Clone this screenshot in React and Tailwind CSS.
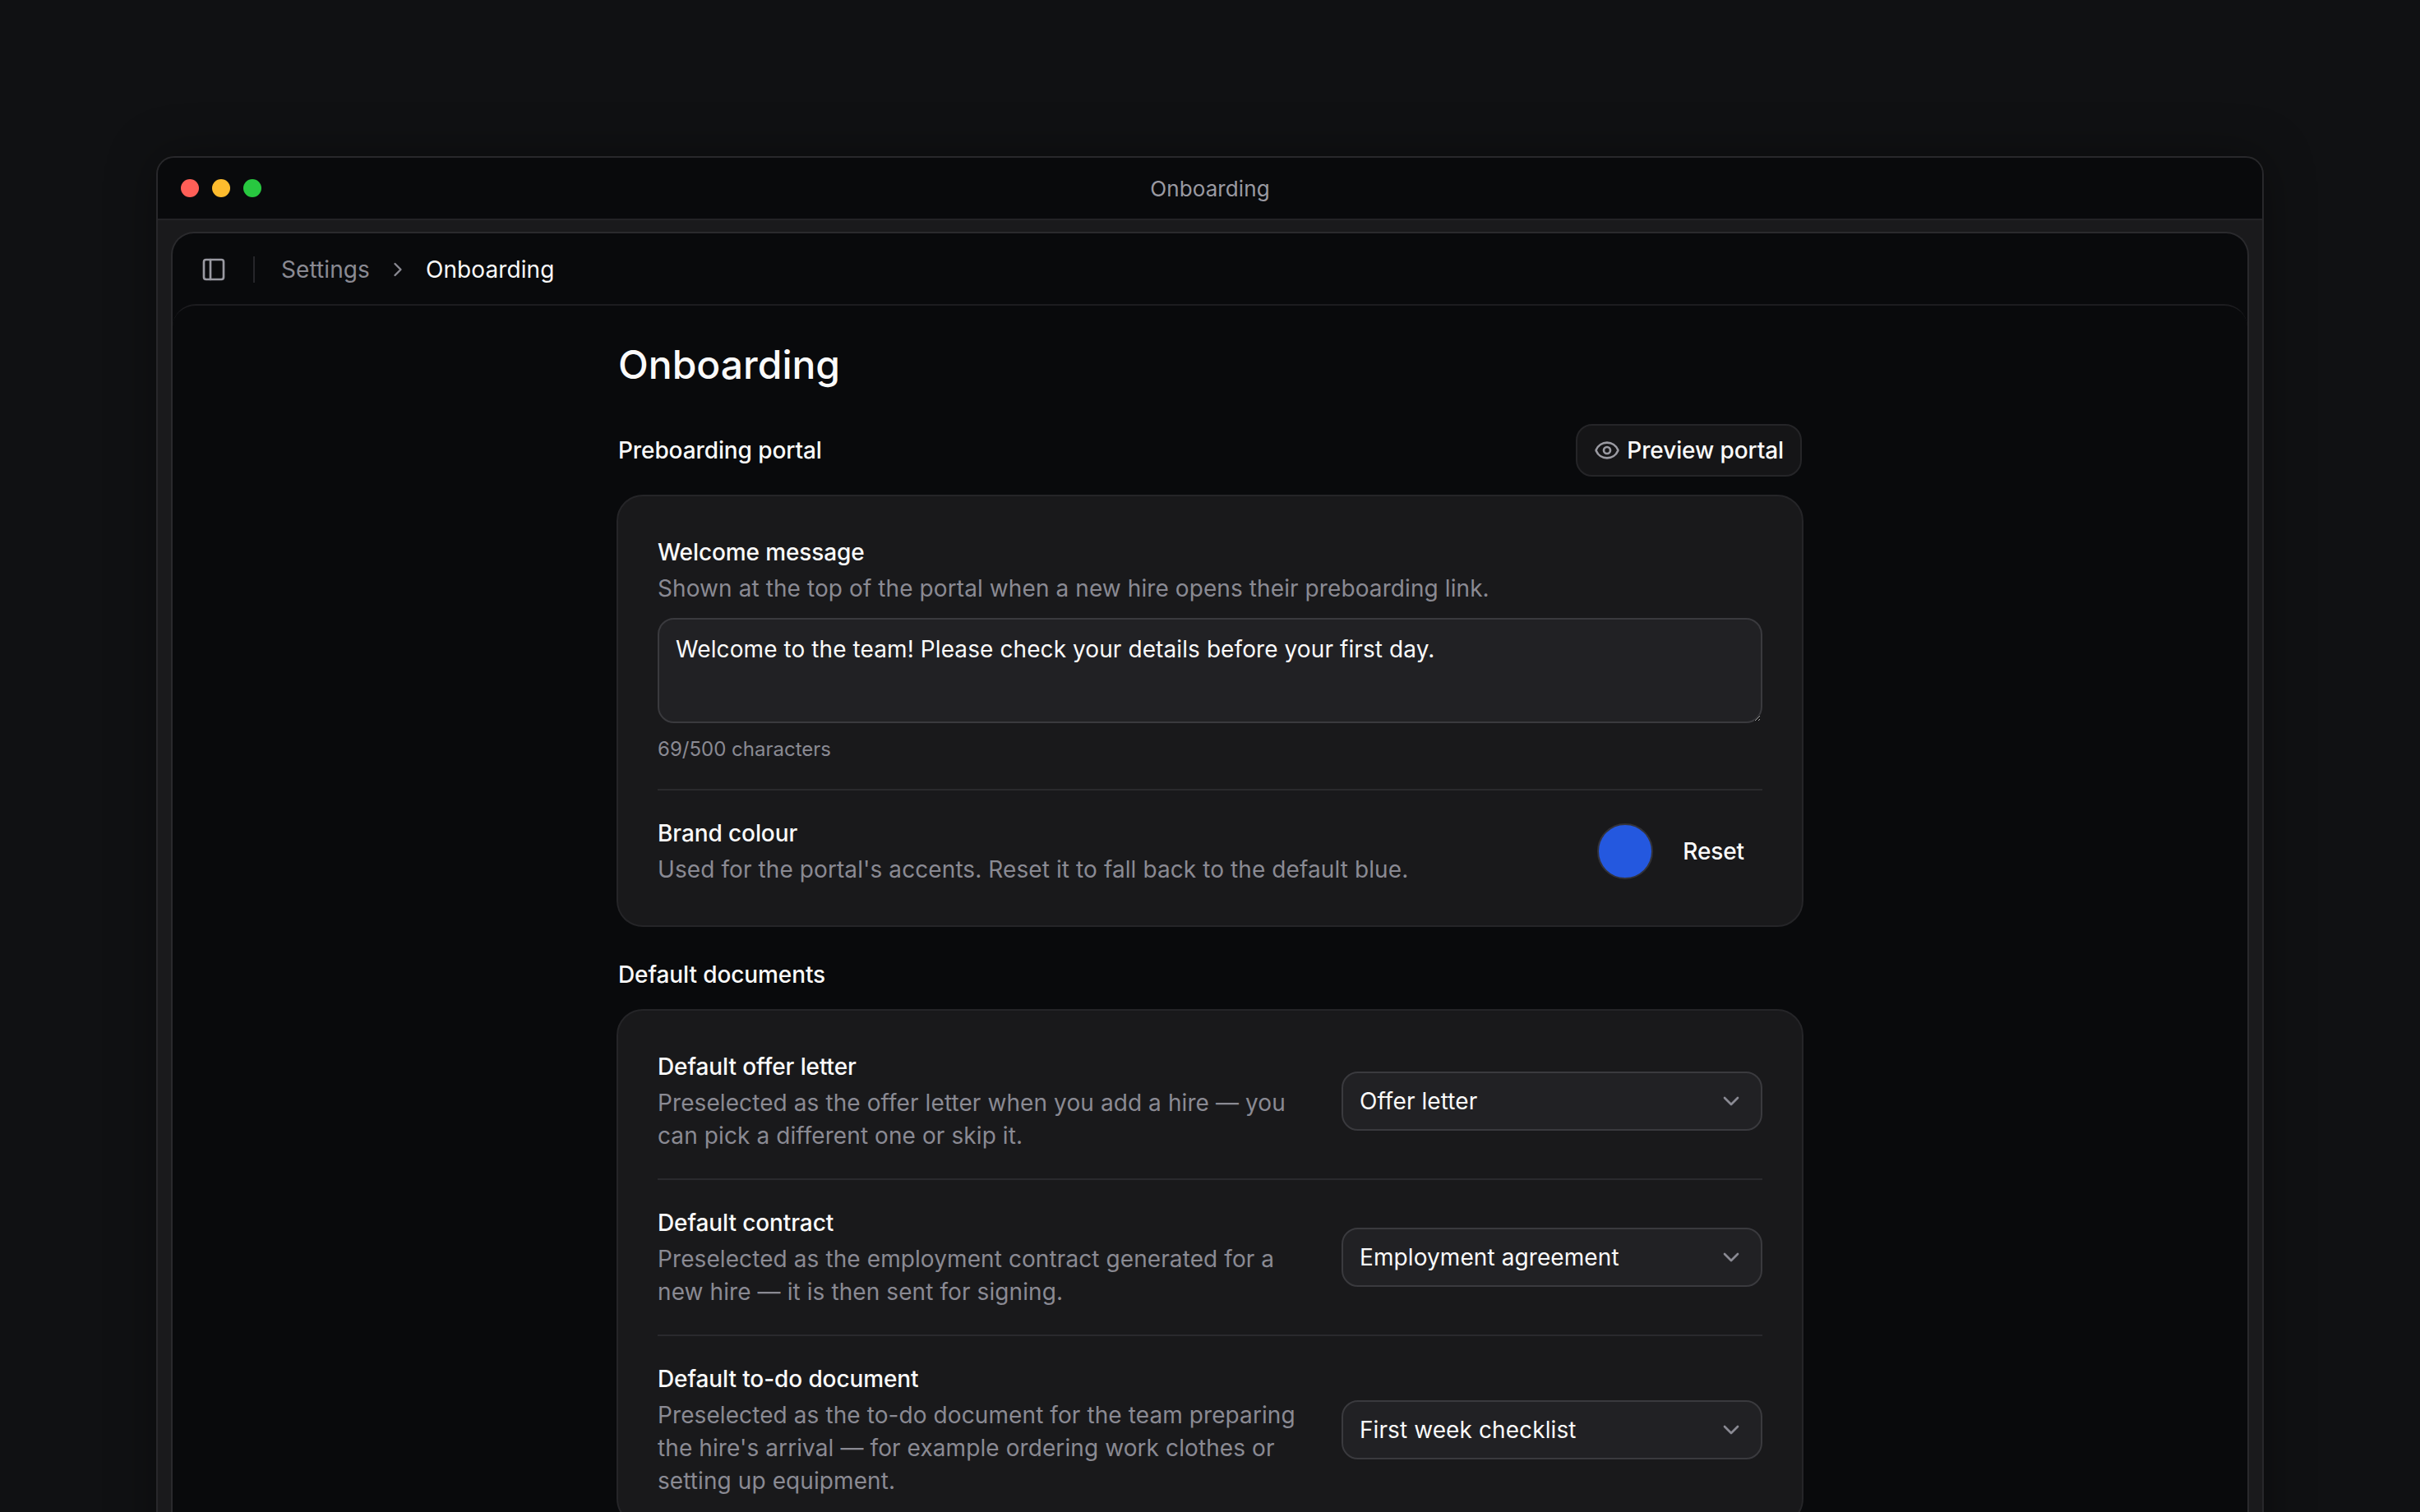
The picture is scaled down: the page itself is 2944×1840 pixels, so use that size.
import { ChevronDown, ChevronRight, Eye, PanelLeft } from "lucide-react";

const documentRows = [
  {
    title: "Default offer letter",
    lines: "Preselected as the offer letter when you add a hire — you can pick a different one or skip it.",
    value: "Offer letter",
  },
  {
    title: "Default contract",
    lines: "Preselected as the employment contract generated for a new hire — it is then sent for signing.",
    value: "Employment agreement",
  },
  {
    title: "Default to-do document",
    lines: "Preselected as the to-do document for the team preparing the hire's arrival — for example ordering work clothes or setting up equipment.",
    value: "First week checklist",
  },
];

function FieldText({ title, children }) {
  return (
    <>
      <div className="text-[28px] leading-[40px] font-medium tracking-[-0.1px] text-[#fafafa]">{title}</div>
      <div className="mt-[4px] text-[28px] leading-[40px] text-[#8a8a93]">{children}</div>
    </>
  );
}

function SelectBox({ value }) {
  return (
    <button
      type="button"
      className="flex h-[72px] w-[512px] shrink-0 items-center justify-between rounded-[20px] border-2 border-[#3a3a3e] bg-[#212124] pr-[20px] pl-[20px] text-[28px] text-[#fafafa]"
    >
      <span>{value}</span>
      <ChevronDown size={32} strokeWidth={2} className="text-[#8a8a93]" />
    </button>
  );
}

export default function App() {
  return (
    <div className="h-[1840px] overflow-hidden bg-[#101113] px-[190px] pt-[190px] font-['Inter',sans-serif] tracking-[0.09px]">
      <div className="h-[1800px] rounded-t-[22px] border-2 border-[#28282b] bg-[#1a1a1c] shadow-[0_0_60px_rgba(0,0,0,0.35)]">
        <div className="relative flex h-[76px] items-center gap-[16px] rounded-t-[20px] border-b-2 border-[#232326] bg-[#090a0c] pl-[28px]">
          <span className="h-[22px] w-[22px] rounded-full bg-[#ff5f57]" />
          <span className="h-[22px] w-[22px] rounded-full bg-[#febc2e]" />
          <span className="h-[22px] w-[22px] rounded-full bg-[#28c840]" />
          <span className="absolute inset-x-0 text-center text-[26px] text-[#9a9aa2]">Onboarding</span>
        </div>

        <div className="mx-[16px] mt-[14px] h-[1700px] rounded-t-[28px] border-2 border-b-0 border-[#2a2a2d] bg-[#090a0c]">
          <div className="flex h-[86px] items-center pt-[2px] pl-[34px] text-[28px]">
            <PanelLeft size={32} strokeWidth={2} className="text-[#9a9aa2]" />
            <span className="mx-[32px] h-[32px] w-[2px] bg-[#26262a]" />
            <span className="text-[#8a8a93]">Settings</span>
            <ChevronRight size={28} strokeWidth={2} className="mx-[20px] text-[#8a8a93]" />
            <span className="text-[#fafafa]">Onboarding</span>
          </div>

          <div className="h-[1600px] rounded-t-[28px] border-t-2 border-[#1c1c1f] bg-[#090a0c] pt-[40px]">
            <div className="mx-auto w-[1444px]">
              <h1 className="px-[2px] text-[48px] leading-[64px] font-medium tracking-normal text-[#fafafa]">Onboarding</h1>

              <div className="mt-[40px] flex h-[64px] items-center justify-between px-[2px]">
                <h2 className="text-[28px] font-medium tracking-[-0.1px] text-[#fafafa]">Preboarding portal</h2>
                <button
                  type="button"
                  className="flex h-[64px] items-center gap-[8px] rounded-[20px] border-2 border-[#252528] bg-[#151517] pr-[20px] pl-[20px] text-[28px] font-medium tracking-[-0.1px] text-[#fafafa]"
                >
                  <Eye size={32} strokeWidth={2} className="text-[#9a9aa2]" />
                  Preview portal
                </button>
              </div>

              <section className="mt-[22px] rounded-[32px] border-2 border-[#252528] bg-[#19191b] p-[48px]">
                <FieldText title="Welcome message">
                  Shown at the top of the portal when a new hire opens their preboarding link.
                </FieldText>
                <textarea
                  readOnly
                  defaultValue="Welcome to the team! Please check your details before your first day."
                  className="mt-[16px] block h-[128px] w-full rounded-[20px] border-2 border-[#3a3a3e] bg-[#212124] px-[20px] py-[16px] text-[28px] leading-[40px] text-[#fafafa] outline-none"
                />
                <div className="mt-[16px] text-[24px] leading-[32px] tracking-normal text-[#8a8a93]">69/500 characters</div>
                <div className="my-[32px] h-[2px] bg-[#2a2a2d]" />
                <div className="flex items-center justify-between">
                  <div>
                    <FieldText title="Brand colour">
                      Used for the portal's accents. Reset it to fall back to the default blue.
                    </FieldText>
                  </div>
                  <div className="flex items-center gap-[12px]">
                    <span className="h-[68px] w-[68px] rounded-full border-2 border-[#33333a] bg-[#2458df]" />
                    <button type="button" className="pr-[22px] pl-[24px] text-[28px] font-medium tracking-[-0.1px] text-[#fafafa]">
                      Reset
                    </button>
                  </div>
                </div>
              </section>

              <h2 className="mt-[38px] px-[2px] text-[28px] leading-[40px] font-medium tracking-[-0.1px] text-[#fafafa]">
                Default documents
              </h2>

              <section className="mt-[22px] rounded-[32px] border-2 border-[#252528] bg-[#19191b] px-[48px] pt-[48px]">
                {documentRows.map((row, i) => (
                  <div
                    key={row.title}
                    className={`flex items-center gap-[48px] ${i > 0 ? "border-t-2 border-[#2a2a2d] pt-[32px]" : ""} pb-[32px]`}
                  >
                    <div className="flex-1">
                      <FieldText title={row.title}>{row.lines}</FieldText>
                    </div>
                    <SelectBox value={row.value} />
                  </div>
                ))}
              </section>
            </div>
          </div>
        </div>
      </div>
    </div>
  );
}
